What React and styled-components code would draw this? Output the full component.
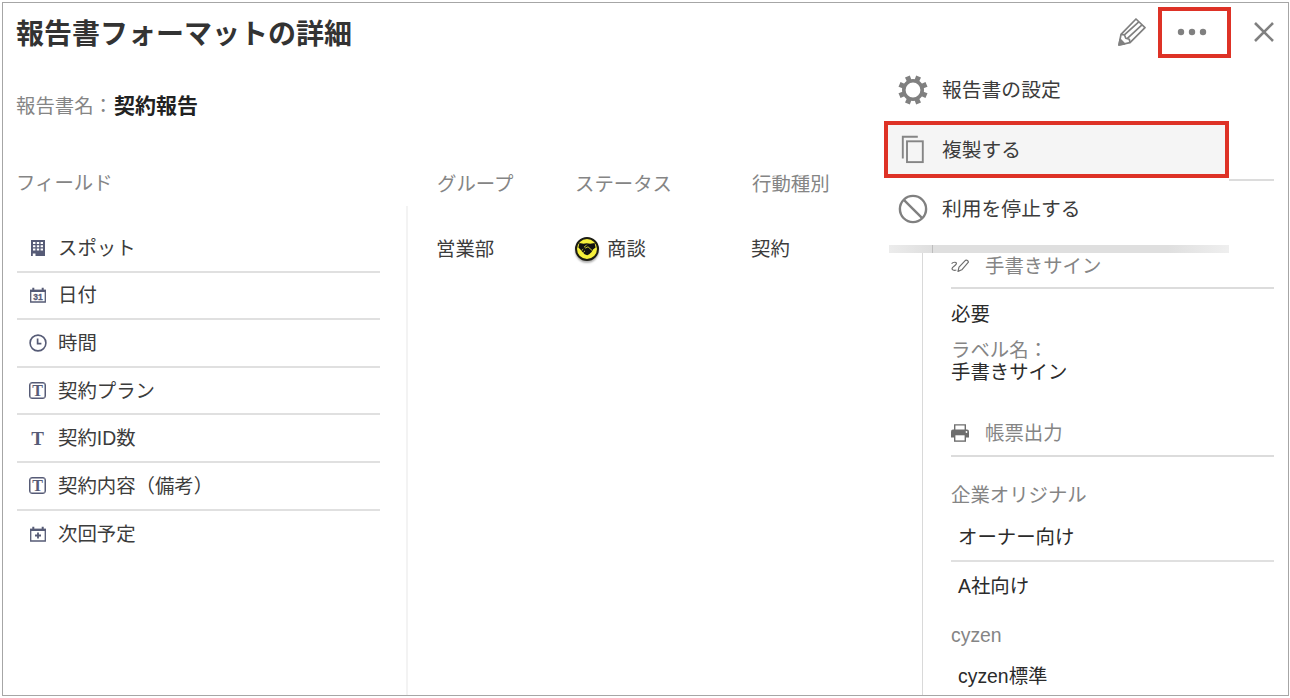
import React from "react";
import styled, { createGlobalStyle, css } from "styled-components";

const GlobalStyle = createGlobalStyle`
  * {
    box-sizing: border-box;
  }
  body {
    margin: 0;
    background: #fff;
    font-family: "Liberation Sans", "Noto Sans CJK JP", sans-serif;
    font-size: 19.4px;
    line-height: 30px;
    color: #3c3c3c;
  }
`;

const flexRow = css`
  display: flex;
  align-items: center;
`;

const Page = styled.div`
  height: 698px;
  padding: 2px 1px 2px 2px;
`;

const Panel = styled.div`
  position: relative;
  height: 694px;
  border: 1px solid #a6a6a6;
  overflow: hidden;
`;

const Header = styled.header`
  ${flexRow};
  justify-content: space-between;
  height: 58px;
  padding: 0 9px 0 13px;
`;

const Title = styled.h1`
  margin: 0;
  padding-top: 6px;
  font-size: 28px;
  font-weight: 700;
  line-height: 40px;
  color: #333;
`;

const Actions = styled.div`
  ${flexRow};
`;

const ActionButton = styled.button`
  ${flexRow};
  justify-content: center;
  width: ${(props) => props.$width || "32px"};
  height: 51px;
  padding: ${(props) => (props.$marked ? "0 6px 1px 0" : "0 0 1px")};
  border: ${(props) => (props.$marked ? "4px solid #de3226" : "none")};
  margin-right: ${(props) => props.$gap || "0"};
  background: none;
  color: #808080;
`;

const Meta = styled.div`
  ${flexRow};
  height: 86px;
  padding: 3px 0 0 13px;
  color: #858585;
  strong {
    margin-left: 1px;
    font-size: 21px;
    color: #222;
  }
`;

const Body = styled.div`
  display: grid;
  grid-template-columns: 405px 514px 1fr;
  height: 549px;
`;

const Column = styled.section`
  display: flex;
  flex-direction: column;
`;

const Heads = styled.div`
  display: grid;
  grid-template-columns: ${(props) => props.$columns || "1fr"};
  height: 59px;
  padding: ${(props) => props.$padding};
  color: #858585;
`;

const FieldList = styled.ul`
  flex: 1;
  margin: 0;
  padding: 19px 26px 0 14px;
  border-right: 2px solid #f3f3f3;
  list-style: none;
`;

const FieldItem = styled.li`
  ${flexRow};
  height: 47.6px;
  padding-left: 11px;
  border-bottom: 2px solid #e0e0e0;
  &:last-child {
    border-bottom: none;
  }
`;

const FieldIcon = styled.span`
  ${flexRow};
  justify-content: center;
  width: 19px;
  height: 20px;
  margin-right: 11px;
  color: #565b76;
`;

const TextGlyph = styled.span`
  ${flexRow};
  justify-content: center;
  width: 17px;
  height: 17px;
  border: ${(props) => (props.$boxed ? "1px solid #565b76" : "none")};
  box-shadow: ${(props) => (props.$boxed ? "inset 0 0 0 0.5px #565b76" : "none")};
  border-radius: 3px;
  font-family: "Liberation Serif", serif;
  font-size: ${(props) => (props.$boxed ? "16px" : "19px")};
  font-weight: 700;
  line-height: 17px;
`;

const Values = styled.div`
  display: grid;
  grid-template-columns: 139px 176px 1fr;
  padding: 28px 0 0 28px;
`;

const Status = styled.div`
  ${flexRow};
  gap: 8px;
`;

const StatusBadge = styled.span`
  ${flexRow};
  justify-content: center;
  width: 24px;
  height: 24px;
  border: 2px solid #1c1c14;
  border-radius: 50%;
  background: #f6f03c;
  box-shadow: 0 2px 2px rgba(0, 0, 0, 0.3);
  color: #111;
`;

const Side = styled.aside`
  padding: 0 14px 0 28px;
  border-left: 1px solid #d9d9d9;
`;

const SideHead = styled.div`
  display: flex;
  align-items: flex-start;
  height: ${(props) => props.$height};
  padding-top: ${(props) => props.$top || "0"};
  border-bottom: 2px solid #dcdcdc;
  color: #858585;
`;

const SideIcon = styled.span`
  ${flexRow};
  width: 34px;
  height: 30px;
  color: #6e6e6e;
`;

const SideText = styled.p`
  margin: ${(props) => props.$top || "0"} 0 0;
  line-height: ${(props) => props.$line || "30px"};
  color: ${(props) => (props.$muted ? "#858585" : "#2b2b2b")};
`;

const OutputItem = styled.div`
  height: ${(props) => props.$height};
  padding: ${(props) => props.$top} 0 0 7px;
  border-bottom: ${(props) => (props.$line ? "2px solid #e0e0e0" : "none")};
  color: #2b2b2b;
`;

const Menu = styled.div`
  position: absolute;
  top: 57px;
  left: 886px;
  width: 340px;
  background: #fff;
`;

const MenuItem = styled.div`
  ${flexRow};
  height: ${(props) => props.$height || "60px"};
  padding: ${(props) => props.$padding || "0 0 0 9px"};
  font-size: 19.8px;
  background: #fff;
  svg {
    width: 30px;
    margin-right: 14px;
  }
`;

const MarkedItem = styled(MenuItem)`
  height: 57px;
  margin: 1px 0 0 -5px;
  padding: 1px 0 0 10px;
  border: 4px solid #de3226;
  background: #f5f5f5;
`;

const MenuShadow = styled.div`
  height: 8px;
  padding-left: 43px;
  background: linear-gradient(to right, #ececec, #dfdfdf 12%, #dfdfdf 82%, #efefef);
  &::before {
    content: "";
    display: block;
    width: 1px;
    height: 8px;
    background: #bdbdbd;
  }
`;

const PencilIcon = () => (
  <svg width="28" height="28" viewBox="0 0 28 28" fill="none" stroke="currentColor" strokeWidth="1.7" strokeLinejoin="round">
    <path d="M1 27 L3 16.4 L18 1 L27 9.6 L12 24.6 Z" />
    <path d="M3 16.4 L6.4 16.8 L7.8 20.2 L11.3 21.3 L12 24.6 M6.4 16.8 L20.8 3.8 M9.4 20.4 L24 6.8" />
    <path d="M1 27 L2.2 21.4 L6.6 25.8 Z" fill="currentColor" />
  </svg>
);

const DotsIcon = () => (
  <svg width="30" height="8" viewBox="0 0 30 8" fill="currentColor">
    <circle cx="4" cy="4" r="3.2" />
    <circle cx="15" cy="4" r="3.2" />
    <circle cx="26" cy="4" r="3.2" />
  </svg>
);

const CloseIcon = () => (
  <svg width="20" height="20" viewBox="0 0 20 20" stroke="currentColor" strokeWidth="2.6">
    <path d="M1 1 L19 19 M19 1 L1 19" />
  </svg>
);

const GearIcon = () => (
  <svg width="30" height="30" viewBox="-15 -15 30 30" fill="#808080">
    {[22.5, 67.5, 112.5, 157.5, 202.5, 247.5, 292.5, 337.5].map((angle) => (
      <path key={angle} d="M-2.4 -9 L-2.6 -14.6 H2.6 L2.4 -9 Z" transform={`rotate(${angle})`} />
    ))}
    <circle r="9.2" fill="#fff" stroke="#808080" strokeWidth="3.6" />
  </svg>
);

const CopyIcon = () => (
  <svg width="30" height="30" viewBox="0 0 30 30" fill="none" stroke="#858585" strokeWidth="1.9">
    <path d="M19.8 1.8 H4.8 V23.5" />
    <rect x="9" y="6.3" width="15.8" height="20.8" />
  </svg>
);

const StopIcon = () => (
  <svg width="30" height="30" viewBox="0 0 30 30" fill="none" stroke="#808080" strokeWidth="2.4">
    <circle cx="15" cy="15" r="13.1" />
    <path d="M5.6 5.6 L24.4 24.4" />
  </svg>
);

const HandshakeIcon = () => (
  <svg width="18" height="14" viewBox="0 0 18 14">
    <path
      d="M1.4 1 L5.6 1.8 L8.6 1.2 L12.2 1.8 L16.6 1 L17.6 5.4 L15 7.6 L13.6 10 L11.2 12.2 L9.2 13.2 L6.6 12.2 L4 9.6 L2.4 7.4 L.4 5.4 Z"
      fill="currentColor"
    />
    <path
      d="M8.8 2.6 L6.4 5 L7.6 6 L10 4.8 L14 8.4 M3.6 8.6 L5.2 7.2 M5.4 10.4 L7 8.8"
      fill="none"
      stroke="#f6f03c"
      strokeWidth=".8"
    />
  </svg>
);

const BuildingIcon = () => (
  <svg width="14" height="16" viewBox="0 0 14 16">
    <path d="M0 0 H14 V16 H4.5 V13.5 H1.8 V16 H0 Z" fill="currentColor" />
    <path
      d="M2 2 h2.4 v2 h-2.4z M5.8 2 h2.4 v2 h-2.4z M9.6 2 h2.4 v2 h-2.4z M2 5.3 h2.4 v2 h-2.4z M5.8 5.3 h2.4 v2 h-2.4z M9.6 5.3 h2.4 v2 h-2.4z M2 8.6 h2.4 v2 h-2.4z M5.8 8.6 h2.4 v2 h-2.4z M9.6 8.6 h2.4 v2 h-2.4z"
      fill="#fff"
    />
  </svg>
);

const CalendarIcon = ({ children }) => (
  <svg width="16" height="16" viewBox="0 0 16 16" fill="none" stroke="currentColor">
    <path d="M.7 3 V15 H15.3 V3" strokeWidth="1.3" />
    <path d="M0 3.8 H16" strokeWidth="2.4" />
    <path d="M3.3 .8 V3 M12.7 .8 V3" strokeWidth="2" />
    {children}
  </svg>
);

const DateIcon = () => (
  <CalendarIcon>
    <text
      x="8"
      y="12.8"
      textAnchor="middle"
      fontSize="8.5"
      fontWeight="700"
      fill="currentColor"
      strokeWidth=".3"
    >
      31
    </text>
  </CalendarIcon>
);

const NextIcon = () => (
  <CalendarIcon>
    <path d="M8 6.5 V12.5 M5 9.5 H11" strokeWidth="1.8" />
  </CalendarIcon>
);

const ClockIcon = () => (
  <svg width="18" height="18" viewBox="0 0 18 18" fill="none" stroke="currentColor" strokeWidth="1.6">
    <circle cx="9" cy="9" r="7.9" />
    <path d="M8.6 4.6 V9.6 H12.4" strokeWidth="1.7" />
  </svg>
);

const SignIcon = () => (
  <svg width="18" height="14" viewBox="0 0 18 14" fill="none" stroke="currentColor" strokeWidth="1.2" strokeLinejoin="round">
    <path d="M.6 4.6 C2 3 5.6 2.6 5.4 4.6 C5.2 6.6 1 7.4 1 9.8 C1 11.6 4 11.4 5.4 11" />
    <path d="M7 12.4 L8 8.2 L14.4 1.4 Q17 .6 17.4 3.2 L10.8 10.8 Z" />
  </svg>
);

const PrintIcon = () => (
  <svg width="18" height="18" viewBox="0 0 18 18">
    <path d="M3.7 7 V.9 H14.3 V7" fill="#fff" stroke="currentColor" strokeWidth="1.4" />
    <path d="M2 5.6 H16 Q18 5.6 18 7.6 V13.6 H0 V7.6 Q0 5.6 2 5.6 Z" fill="currentColor" />
    <rect x="3.7" y="10.6" width="10.6" height="6.5" fill="#fff" stroke="currentColor" strokeWidth="1.4" />
    <circle cx="15.5" cy="8" r=".9" fill="#fff" />
  </svg>
);

const fields = [
  { name: "スポット", icon: <BuildingIcon /> },
  { name: "日付", icon: <DateIcon /> },
  { name: "時間", icon: <ClockIcon /> },
  { name: "契約プラン", icon: <TextGlyph $boxed>T</TextGlyph> },
  { name: "契約ID数", icon: <TextGlyph>T</TextGlyph> },
  { name: "契約内容（備考）", icon: <TextGlyph $boxed>T</TextGlyph> },
  { name: "次回予定", icon: <NextIcon /> },
];

const App = () => {
  return (
    <Page>
      <GlobalStyle />
      <Panel>
        <Header>
          <Title>報告書フォーマットの詳細</Title>
          <Actions>
            <ActionButton aria-label="編集" $gap="10px">
              <PencilIcon />
            </ActionButton>
            <ActionButton aria-label="メニュー" $width="73px" $gap="18px" $marked>
              <DotsIcon />
            </ActionButton>
            <ActionButton aria-label="閉じる" $width="30px">
              <CloseIcon />
            </ActionButton>
          </Actions>
        </Header>
        <Meta>
          報告書名：<strong>契約報告</strong>
        </Meta>
        <Body>
          <Column>
            <Heads $padding="21px 0 0 13px">フィールド</Heads>
            <FieldList>
              {fields.map((field) => (
                <FieldItem key={field.name}>
                  <FieldIcon>{field.icon}</FieldIcon>
                  {field.name}
                </FieldItem>
              ))}
            </FieldList>
          </Column>
          <Column>
            <Heads $columns="138px 177px 1fr" $padding="22px 0 0 29px">
              <span>グループ</span>
              <span>ステータス</span>
              <span>行動種別</span>
            </Heads>
            <Values>
              <span>営業部</span>
              <Status>
                <StatusBadge>
                  <HandshakeIcon />
                </StatusBadge>
                商談
              </Status>
              <span>契約</span>
            </Values>
          </Column>
          <Side>
            <SideHead $height="34px" />
            <SideHead $height="108px" $top="70px">
              <SideIcon>
                <SignIcon />
              </SideIcon>
              手書きサイン
            </SideHead>
            <SideText $top="10px">必要</SideText>
            <SideText $top="10px" $line="22px" $muted>
              ラベル名：
            </SideText>
            <SideText $line="22px">手書きサイン</SideText>
            <SideHead $height="74px" $top="35px">
              <SideIcon>
                <PrintIcon />
              </SideIcon>
              帳票出力
            </SideHead>
            <SideText $top="23px" $muted>
              企業オリジナル
            </SideText>
            <OutputItem $height="52px" $top="12px" $line>
              オーナー向け
            </OutputItem>
            <OutputItem $height="39px" $top="9px">
              A社向け
            </OutputItem>
            <SideText $top="19px" $muted>
              cyzen
            </SideText>
            <OutputItem $height="42px" $top="11px">
              cyzen標準
            </OutputItem>
          </Side>
        </Body>
        <Menu>
          <MenuItem>
            <GearIcon />
            報告書の設定
          </MenuItem>
          <MarkedItem>
            <CopyIcon />
            複製する
          </MarkedItem>
          <MenuItem $height="67px" $padding="0 0 6px 9px">
            <StopIcon />
            利用を停止する
          </MenuItem>
          <MenuShadow />
        </Menu>
      </Panel>
    </Page>
  );
};

export default App;
